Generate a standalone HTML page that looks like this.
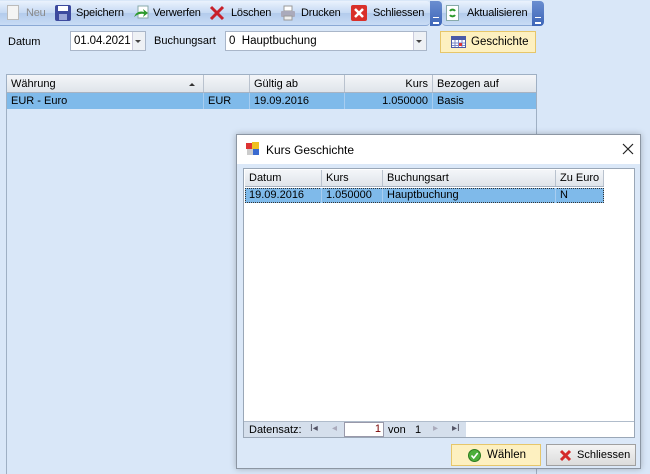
<!DOCTYPE html>
<html><head><meta charset="utf-8"><style>
*{box-sizing:border-box;margin:0;padding:0}
body{width:650px;height:474px;overflow:hidden;background:#d9e7f8;font-family:"Liberation Sans",sans-serif;font-size:11px;color:#000;position:relative}
.abs{position:absolute}
.tb{left:0;top:0;width:650px;height:27px;background:#d9e7f8}
.tbar{left:0;top:1px;height:25px;border-radius:0 4px 4px 0;background:linear-gradient(#eaf2fd,#c5d9f3 50%,#b3cbec 51%,#c9dcf5);border-bottom:1px solid #8ba9d5}
.ti{position:absolute;top:7px;font-size:11px;letter-spacing:-.2px;white-space:nowrap}
.ic{position:absolute;top:5px;width:16px;height:16px}
.drop{position:absolute;top:1px;width:12px;height:25px;background:linear-gradient(#6b8ed0,#3c65b8);border-radius:0 4px 4px 0}
.drop:after{content:"";position:absolute;left:3px;top:16px;width:6px;height:4px;border-top:1px solid #fff;border-bottom:2px solid #fff}
.inp{background:#fff;border:1px solid #a9b6c9;height:20px}
.hdr{background:linear-gradient(#f4f6f9,#dfe4ea);border-bottom:1px solid #a8b3c2}
.cell{position:absolute;top:0;height:100%;padding:3px 4px;white-space:nowrap;border-right:1px solid #b9c2ce}
.sel{background:#7fbaea}
</style></head><body>
<div class="abs tb"></div>
<div class="abs tbar" style="width:430px"></div>
<div class="abs drop" style="left:430px"></div>
<div class="abs tbar" style="left:442px;width:90px;border-radius:4px 0 0 4px"></div>
<div class="abs drop" style="left:532px"></div>
<div class="ic" style="left:7px;width:12px;height:15px;background:#f4f4f4;border:1px solid #bbb"></div>
<div class="ti" style="left:26px;color:#8a8a8a">Neu</div>
<div class="ic" style="left:55px;background:#3d4a9e;border-radius:2px"><div style="position:absolute;left:3px;top:1px;width:10px;height:5px;background:#fff"></div><div style="position:absolute;left:4px;top:9px;width:8px;height:6px;background:#9aa6d8"></div></div>
<div class="ti" style="left:76px">Speichern</div>
<div class="ic" style="left:133px"><svg width="17" height="16"><rect x="5" y="1" width="10" height="12" fill="#fff" stroke="#8aa"/><path d="M1 12 Q4 5 11 7 L10 4 L15 8 L10 12 L11 9 Q6 8 1 12Z" fill="#2e9a2e"/></svg></div>
<div class="ti" style="left:153px">Verwerfen</div>
<div class="ic" style="left:209px"><svg width="16" height="16"><path d="M2 2L14 14M14 2L2 14" stroke="#c8202a" stroke-width="3"/></svg></div>
<div class="ti" style="left:231px">Löschen</div>
<div class="ic" style="left:280px"><svg width="16" height="16"><rect x="4" y="1" width="8" height="5" fill="#fff" stroke="#999"/><rect x="1" y="6" width="14" height="6" fill="#aab" rx="1"/><rect x="4" y="11" width="8" height="4" fill="#eee" stroke="#999"/></svg></div>
<div class="ti" style="left:301px">Drucken</div>
<div class="ic" style="left:351px;background:#d9302a;border-radius:2px"><svg width="16" height="16"><path d="M4 4L12 12M12 4L4 12" stroke="#fff" stroke-width="2.5"/></svg></div>
<div class="ti" style="left:373px">Schliessen</div>
<div class="ic" style="left:446px;width:13px;background:#fff;border:1px solid #8aa"><svg width="11" height="14"><path d="M3 5a3 3 0 0 1 5 0M8 9a3 3 0 0 1-5 0" stroke="#2a9a2a" stroke-width="2" fill="none"/></svg></div>
<div class="ti" style="left:467px">Aktualisieren</div>
<div class="abs" style="left:8px;top:36px">Datum</div>
<div class="abs inp" style="left:70px;top:31px;width:76px"><span style="position:absolute;left:3px;top:3px;font-size:11.5px;letter-spacing:-.1px">01.04.2021</span><span style="position:absolute;right:0;top:0;width:13px;height:18px;background:#eef1f5;border-left:1px solid #ccd"></span><span style="position:absolute;right:4px;top:8px;border:3px solid transparent;border-top:3px solid #444"></span></div>
<div class="abs" style="left:154px;top:35px">Buchungsart</div>
<div class="abs inp" style="left:225px;top:31px;width:202px"><span style="position:absolute;left:3px;top:3px;font-size:11.5px">0&nbsp; Hauptbuchung</span><span style="position:absolute;right:0;top:0;width:13px;height:18px;background:#eef1f5;border-left:1px solid #ccd"></span><span style="position:absolute;right:4px;top:8px;border:3px solid transparent;border-top:3px solid #444"></span></div>
<div class="abs" style="left:440px;top:31px;width:96px;height:22px;background:#fdf0c0;border:1px solid #e6c66a"><svg style="position:absolute;left:10px;top:4px" width="15" height="12"><rect x=".5" y=".5" width="14" height="11" fill="#fff" stroke="#4a5aa8"/><rect x="1" y="1" width="13" height="3" fill="#4a5aa8"/><path d="M1 7H14M1 9.5H14M4 4V11M7.5 4V11M11 4V11" stroke="#7a8ac8"/><rect x="8" y="7" width="3" height="3" fill="#d33"/></svg><span style="position:absolute;left:30px;top:4px;font-size:11.5px">Geschichte</span></div>
<div class="abs" style="left:6px;top:74px;width:531px;height:400px;background:#d9e7f8;border-left:1px solid #9fb0c4;border-right:1px solid #9fb0c4;border-top:1px solid #9fb0c4"></div>
<div class="abs hdr" style="left:7px;top:75px;width:529px;height:18px">
 <div class="cell" style="left:0;width:197px">Währung<span style="position:absolute;right:8px;top:5px;border:3px solid transparent;border-bottom:3px solid #333"></span></div>
 <div class="cell" style="left:197px;width:46px"></div>
 <div class="cell" style="left:243px;width:95px">Gültig ab</div>
 <div class="cell" style="left:338px;width:88px;text-align:right">Kurs</div>
 <div class="cell" style="left:426px;width:103px;border:none">Bezogen auf</div>
</div>
<div class="abs sel" style="left:7px;top:93px;width:529px;height:16px">
 <div class="cell" style="left:0;width:197px;padding-top:2px;border-color:#a8cdf0">EUR - Euro</div>
 <div class="cell" style="left:197px;width:46px;padding-top:2px;border-color:#a8cdf0">EUR</div>
 <div class="cell" style="left:243px;width:95px;padding-top:2px;border-color:#a8cdf0">19.09.2016</div>
 <div class="cell" style="left:338px;width:88px;padding-top:2px;text-align:right;border-color:#a8cdf0">1.050000</div>
 <div class="cell" style="left:426px;width:103px;padding-top:2px;border:none">Basis</div>
</div>
<div class="abs" style="left:236px;top:134px;width:405px;height:335px;background:#dbe8f8;border:1px solid #8c96a3;box-shadow:0 0 6px rgba(0,0,0,.25)">
 <div style="position:absolute;left:0;top:0;width:403px;height:29px;background:#fff"></div>
 <svg style="position:absolute;left:9px;top:7px" width="14" height="14"><rect x="0" y="1" width="6" height="6" fill="#d33"/><rect x="6" y="0" width="7" height="7" fill="#f0c020"/><rect x="1" y="7" width="6" height="6" fill="#ccc"/><rect x="7" y="7" width="6" height="6" fill="#3a6ad0"/></svg>
 <div style="position:absolute;left:29px;top:8px;font-size:12px">Kurs Geschichte</div>
 <svg style="position:absolute;left:385px;top:8px" width="12" height="12"><path d="M1 1L11 11M11 1L1 11" stroke="#222" stroke-width="1.2"/></svg>
 <div style="position:absolute;left:6px;top:33px;width:392px;height:270px;background:#fff;border:1px solid #9aa7b7">
  <div class="hdr" style="position:absolute;left:1px;top:1px;width:359px;height:17px">
   <div class="cell" style="left:0;width:77px;padding-top:2px">Datum</div>
   <div class="cell" style="left:77px;width:61px;padding-top:2px">Kurs</div>
   <div class="cell" style="left:138px;width:173px;padding-top:2px">Buchungsart</div>
   <div class="cell" style="left:311px;width:48px;padding-top:2px">Zu Euro</div>
  </div>
  <div class="sel" style="position:absolute;left:1px;top:19px;width:359px;height:15px;outline:1px dotted #333;outline-offset:-1px">
   <div class="cell" style="left:0;width:77px;padding-top:1px;border-color:#a8cdf0">19.09.2016</div>
   <div class="cell" style="left:77px;width:61px;padding-top:1px;border-color:#a8cdf0">1.050000</div>
   <div class="cell" style="left:138px;width:173px;padding-top:1px;border-color:#a8cdf0">Hauptbuchung</div>
   <div class="cell" style="left:311px;width:48px;padding-top:1px;border:none">N</div>
  </div>
  <div style="position:absolute;left:0;top:252px;width:222px;height:16px;background:#d5dfec;border-top:1px solid #b0bccb">
   <span style="position:absolute;left:5px;top:2px">Datensatz:</span>
   <span style="position:absolute;left:66px;top:1px;color:#556;font-size:10px">I◂</span>
   <span style="position:absolute;left:88px;top:1px;color:#aab;font-size:10px">◂</span>
   <span style="position:absolute;left:100px;top:0;width:40px;height:15px;background:#fff;border:1px solid #99a;text-align:right;padding-right:2px;color:#700">1</span>
   <span style="position:absolute;left:144px;top:2px">von</span>
   <span style="position:absolute;left:171px;top:2px">1</span>
   <span style="position:absolute;left:189px;top:1px;color:#aab;font-size:10px">▸</span>
   <span style="position:absolute;left:208px;top:1px;color:#556;font-size:10px">▸I</span>
  </div>
  <div style="position:absolute;left:222px;top:252px;width:168px;height:16px;border-top:1px solid #b0bccb;background:#fff"></div>
 </div>
 <div style="position:absolute;left:214px;top:309px;width:90px;height:22px;background:#fdf0c0;border:1px solid #e6c66a">
  <svg style="position:absolute;left:16px;top:4px" width="13" height="13"><circle cx="6.5" cy="6.5" r="6" fill="#4caf3a" stroke="#2d7a20"/><path d="M3.5 6.5L5.7 9L9.7 4" stroke="#fff" stroke-width="1.6" fill="none"/></svg>
  <span style="position:absolute;left:35px;top:4px;font-size:11.5px">Wählen</span></div>
 <div style="position:absolute;left:309px;top:309px;width:90px;height:22px;background:linear-gradient(#f4f4f4,#dcdcdc);border:1px solid #a0a0a0">
  <svg style="position:absolute;left:12px;top:4px" width="13" height="13"><path d="M2 2L11 11M11 2L2 11" stroke="#d42a2a" stroke-width="3"/></svg>
  <span style="position:absolute;left:30px;top:4px;font-size:11px">Schliessen</span></div>
</div>
</body></html>
